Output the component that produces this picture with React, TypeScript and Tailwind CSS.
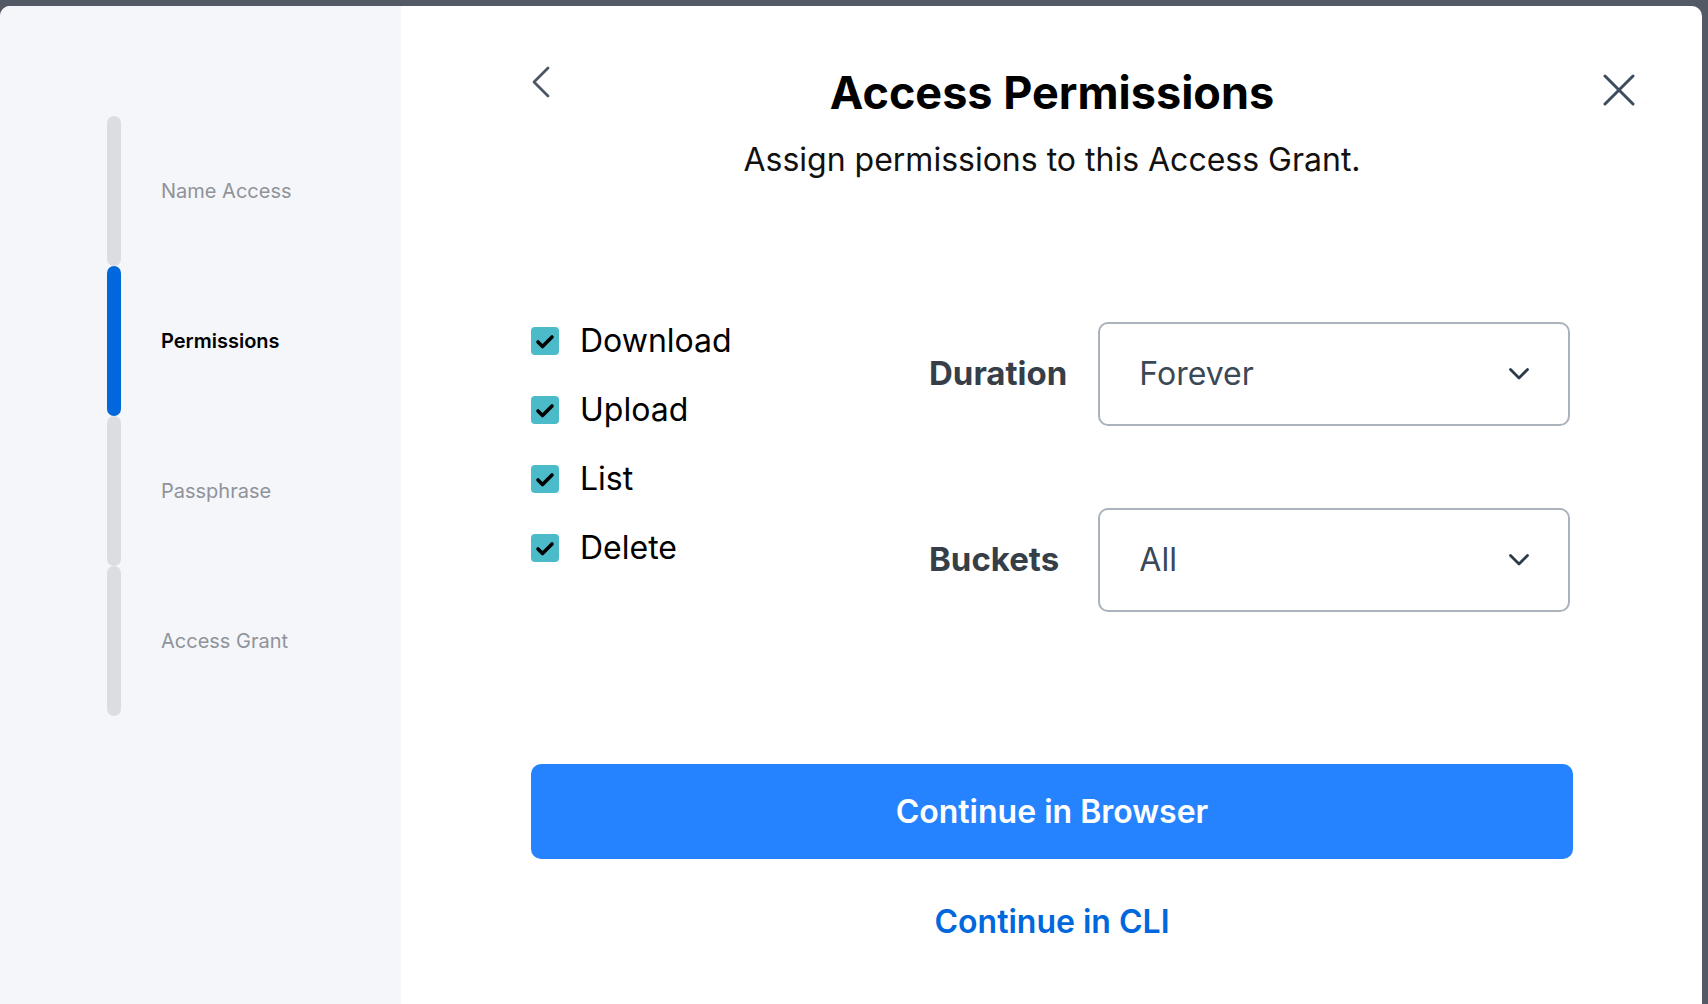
const steps = [
  { label: 'Name Access', active: false },
  { label: 'Permissions', active: true },
  { label: 'Passphrase', active: false },
  { label: 'Access Grant', active: false },
];

const perms = ['Download', 'Upload', 'List', 'Delete'];

function Chevron() {
  return (
    <svg viewBox="0 0 22 14" className="w-[22px] h-[14px]" fill="none" stroke="currentColor" strokeWidth="2.8" strokeLinecap="round" strokeLinejoin="round">
      <path d="M2.5 2.5l8.5 8.5 8.5-8.5" />
    </svg>
  );
}

function Select({ value }: { value: string }) {
  return (
    <div className="w-[472px] h-[104px] border-2 border-[#aab2bc] rounded-[10px] pl-[39px] pr-[38px] flex items-center justify-between text-[32px] text-[#3a4858]">
      <span>{value}</span>
      <span className="text-[#2d3a4a]">
        <Chevron />
      </span>
    </div>
  );
}

export default function App() {
  return (
    <div className="h-screen w-full bg-[#535a66] pt-[6px] pr-[6px] overflow-hidden font-['Inter',sans-serif]">
      <div className="flex h-full rounded-t-[10px] bg-white overflow-hidden">
        {/* Steps sidebar */}
        <div className="w-[401px] shrink-0 bg-[#f4f6fa] pt-[110px] pl-[107px]">
          {steps.map((s) => (
            <div key={s.label} className="h-[150px] flex items-center">
              <div className={`w-[14px] h-full rounded-full ${s.active ? 'bg-[#0068dc]' : 'bg-[#dcdde1]'}`}></div>
              <div className={`ml-[40px] text-[20px] ${s.active ? 'font-semibold text-black' : 'text-[#909399]'}`}>
                {s.label}
              </div>
            </div>
          ))}
        </div>

        {/* Main */}
        <div className="flex-1 relative">
          <button className="absolute top-[68px] right-[67px] w-8 h-8 text-[#3d4b5f]">
            <svg viewBox="0 0 32 32" className="w-8 h-8" fill="none" stroke="currentColor" strokeWidth="3" strokeLinecap="round">
              <path d="M2 2l28 28M30 2L2 30" />
            </svg>
          </button>

          <div className="ml-[130px] w-[1042px]">
            {/* Header */}
            <div className="relative pt-[62px] text-center">
              <button className="absolute left-0 top-[60px] w-5 h-8 text-[#4b5563]">
                <svg viewBox="0 0 20 32" className="w-5 h-8" fill="none" stroke="currentColor" strokeWidth="2.8" strokeLinecap="round" strokeLinejoin="round">
                  <path d="M17 2L3 16l14 14" />
                </svg>
              </button>
              <h1 className="text-[45px] leading-[50px] font-bold text-black">Access Permissions</h1>
              <p className="mt-[22px] text-[32px] leading-[40px] text-[#111]">Assign permissions to this Access Grant.</p>
            </div>

            {/* Body */}
            <div className="mt-[126px] flex">
              <div className="w-[398px] flex flex-col">
                {perms.map((p) => (
                  <div key={p} className="h-[69px] flex items-center">
                    <div className="w-[28px] h-[28px] rounded-[4px] bg-[#4bbac9] flex items-center justify-center">
                      <svg viewBox="0 0 28 28" className="w-7 h-7" fill="none" stroke="#000" strokeWidth="3.6" strokeLinecap="round" strokeLinejoin="round">
                        <path d="M7 15l4.5 4.5L21 10" />
                      </svg>
                    </div>
                    <span className="ml-[21px] text-[32px] text-black">{p}</span>
                  </div>
                ))}
              </div>
              <div className="mt-[16px] grid grid-cols-[auto_472px] gap-x-[31px] gap-y-[82px] items-center">
                <div className="text-[33px] font-bold text-[#363e48]">Duration</div>
                <Select value="Forever" />
                <div className="text-[33px] font-bold text-[#363e48]">Buckets</div>
                <Select value="All" />
              </div>
            </div>

            {/* Actions */}
            <button className="mt-[152px] w-full h-[95px] rounded-[10px] bg-[#2683ff] text-white text-[32px] font-semibold">
              Continue in Browser
            </button>
            <div className="mt-[43px] text-center">
              <button className="text-[32px] leading-[40px] font-semibold text-[#0068dc]">Continue in CLI</button>
            </div>
          </div>
        </div>
      </div>
    </div>
  );
}
